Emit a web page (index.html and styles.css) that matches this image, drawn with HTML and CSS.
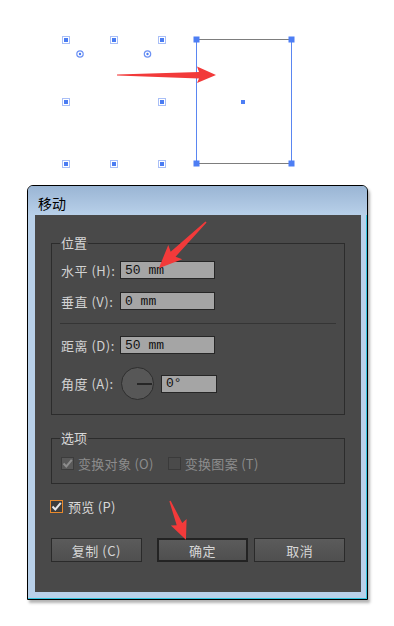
FILE: index.html
```html
<!DOCTYPE html>
<html lang="zh-CN">
<head>
  <meta charset="UTF-8">
  <meta name="viewport" content="width=device-width, initial-scale=1.0">
  <title>移动</title>
  <link rel="stylesheet" href="styles.css">
</head>
<body>
  <div class="canvas">
    <svg width="394" height="185" viewBox="0 0 394 185">
      <defs>
        <g id="handle">
          <rect x="-3.5" y="-3.5" width="7" height="7" fill="none" stroke="#a9bff7"/>
          <rect x="-2" y="-2" width="4" height="4" fill="#4a7cf2"/>
        </g>
        <g id="pivot">
          <circle r="3.2" fill="none" stroke="#6d92f4" stroke-width="1.2"/>
          <circle r="1.2" fill="#4a7cf2"/>
        </g>
        <rect id="corner" x="-3" y="-3" width="6" height="6" fill="#4d7ef4"/>
      </defs>
      <!-- original position -->
      <use href="#handle" x="66" y="40"/>
      <use href="#handle" x="114" y="40"/>
      <use href="#handle" x="162" y="40"/>
      <use href="#handle" x="66" y="102"/>
      <use href="#handle" x="162" y="102"/>
      <use href="#handle" x="66" y="164"/>
      <use href="#handle" x="114" y="164"/>
      <use href="#handle" x="162" y="164"/>
      <use href="#pivot" x="80" y="54"/>
      <use href="#pivot" x="147.5" y="54"/>
      <!-- moved copy -->
      <rect x="196.5" y="39.5" width="95" height="124" fill="none" stroke="#5a86f1"/>
      <line x1="197" y1="39.5" x2="291" y2="39.5" stroke="#7d7d7d"/>
      <line x1="197" y1="163.5" x2="291" y2="163.5" stroke="#7d7d7d"/>
      <use href="#corner" x="196.5" y="39.5"/>
      <use href="#corner" x="291.5" y="39.5"/>
      <use href="#corner" x="196.5" y="163.5"/>
      <use href="#corner" x="291.5" y="163.5"/>
      <rect x="241" y="100" width="4" height="4" fill="#4d7ef4"/>
    </svg>
  </div>

  <div class="dialog">
    <div class="title-bar">移动</div>
    <div class="dialog-body">
      <fieldset class="group group-position">
        <legend>位置</legend>
        <div class="row">
          <label class="row-label">水平 (H):</label>
          <input class="field" type="text" value="50 mm">
        </div>
        <div class="row">
          <label class="row-label">垂直 (V):</label>
          <input class="field" type="text" value="0 mm">
        </div>
        <div class="separator"></div>
        <div class="row">
          <label class="row-label">距离 (D):</label>
          <input class="field" type="text" value="50 mm">
        </div>
        <div class="row row-angle">
          <label class="row-label">角度 (A):</label>
          <div class="dial"><span class="dial-hand"></span></div>
          <input class="field field-angle" type="text" value="0°">
        </div>
      </fieldset>

      <fieldset class="group group-options">
        <legend>选项</legend>
        <div class="check-row">
          <span class="check check-disabled">
            <svg width="11" height="11" viewBox="0 0 11 11"><path d="M1.5 5.5 L4.3 8.5 L9.8 1.8" fill="none" stroke="#8d8d8d" stroke-width="2"/></svg>
          </span>
          <span class="check-text disabled">变换对象 (O)</span>
          <span class="check check-empty"></span>
          <span class="check-text disabled">变换图案 (T)</span>
        </div>
      </fieldset>

      <div class="check-row preview-row">
        <span class="check check-preview">
          <svg width="11" height="11" viewBox="0 0 11 11"><path d="M1.5 5.5 L4.3 8.5 L9.8 1.8" fill="none" stroke="#e6e6e6" stroke-width="2"/></svg>
        </span>
        <span class="check-text">预览 (P)</span>
      </div>

      <div class="buttons">
        <button class="btn btn-copy">复制 (C)</button>
        <button class="btn btn-ok">确定</button>
        <button class="btn btn-cancel">取消</button>
      </div>
    </div>
  </div>

  <svg class="arrows" width="394" height="626" viewBox="0 0 394 626">
    <polygon fill="#f23a3a" transform="translate(117,75)" points="0,-0.6 82,-3 80,-8.5 99,0 80,8 82,3.5 0,0.6"/>
    <polygon fill="#f23a3a" transform="translate(206,222) rotate(135.6)" points="0,-0.8 46,-3.5 43,-10 66,0 43,10 46,3.5 0,0.8"/>
    <polygon fill="#f23a3a" transform="translate(170,501) rotate(67.7)" points="0,-0.7 25,-3 23,-8.5 42,0 23,8.5 25,3 0,0.7"/>
  </svg>
</body>
</html>
```

FILE: styles.css
```css
body {
  margin: 0;
  padding: 0;
  background: #fff;
  font-family: "Noto Sans CJK SC", "Liberation Sans", sans-serif;
  position: relative;
  width: 394px;
  height: 626px;
  overflow: hidden;
}

.canvas svg {
  display: block;
}

.arrows {
  position: absolute;
  top: 0;
  left: 0;
  pointer-events: none;
}

.dialog {
  margin-left: 27px;
  width: 341px;
  box-sizing: border-box;
  border: 1px solid #000;
  border-radius: 6px 6px 0 0;
  background: #b9d1ea;
  box-shadow: inset -1px -1px 0 #33c4de, 2px 3px 3px rgba(0, 0, 0, 0.3);
}

.title-bar {
  height: 29px;
  box-sizing: border-box;
  padding: 4px 0 0 10px;
  display: flex;
  align-items: center;
  font-size: 14px;
  color: #000;
  border-radius: 5px 5px 0 0;
  background: linear-gradient(to bottom, #9ab5d4, #b8d0e9);
}

.dialog-body {
  margin: 0 6px 7px 7px;
  height: 377px;
  box-sizing: border-box;
  padding: 0 16px;
  background: #494949;
  overflow: hidden;
  color: #d6d6d6;
  font-size: 13px;
}

.group {
  margin: 0;
  min-width: 0;
  border: 1px solid #2c2c2c;
  padding: 10px 8px 14px 8px;
}

.group legend {
  padding: 0 1px;
  font-size: 13px;
  line-height: 16px;
  color: #d8d8d8;
}

.group-position {
  margin-top: 20px;
}

.group-options {
  margin-top: 15px;
  padding: 9px 8px 12px 8px;
}

.row {
  display: flex;
  align-items: center;
  height: 18px;
  margin-bottom: 13px;
}

.row:last-child {
  margin-bottom: 0;
}

.row-label {
  width: 60px;
  padding-left: 1px;
  box-sizing: border-box;
  white-space: nowrap;
  letter-spacing: 0.5px;
  color: #d2d2d2;
}

.field {
  width: 95px;
  height: 18px;
  box-sizing: border-box;
  margin: 0;
  border: 1px solid #262626;
  background: #a5a5a5;
  padding: 0 4px;
  font-family: "Liberation Mono", monospace;
  font-size: 13px;
  color: #111;
  outline: none;
}

.separator {
  height: 1px;
  background: #353535;
  margin: 12px 0;
}

.row-angle {
  height: 33px;
}

.dial {
  width: 33px;
  height: 33px;
  box-sizing: border-box;
  border: 1.5px solid #2e2e2e;
  border-radius: 50%;
  background: #575757;
  position: relative;
  margin-left: 1px;
}

.dial-hand {
  position: absolute;
  left: 15px;
  top: 14.5px;
  width: 15px;
  height: 2px;
  background: #262626;
}

.field-angle {
  width: 56px;
  margin-left: 7px;
}

.check-row {
  display: flex;
  align-items: center;
  height: 16px;
}

.check {
  width: 13px;
  height: 13px;
  box-sizing: border-box;
  display: flex;
  align-items: center;
  justify-content: center;
}

.check-disabled {
  margin-left: 1px;
  border: 1px solid #3c3c3c;
  background: #595959;
}

.check-empty {
  margin-left: 14px;
  border: 1px solid #3a3a3a;
  background: #4a4a4a;
}

.check-text {
  margin-left: 4px;
  letter-spacing: 0.3px;
  white-space: nowrap;
}

.check-text.disabled {
  color: #8c8c8c;
}

.preview-row {
  margin: 16px 0 0 -1px;
  height: 13px;
}

.check-preview {
  border: 1px solid #e8892b;
  background: #3d3d3d;
}

.preview-row .check-text {
  margin-left: 5px;
  color: #d8d8d8;
}

.buttons {
  display: flex;
  margin-top: 25px;
}

.btn {
  height: 24px;
  box-sizing: border-box;
  width: 91px;
  margin: 0;
  padding: 0;
  border: 1px solid #2a2a2a;
  background: linear-gradient(to bottom, #5b5b5b, #4f4f4f);
  color: #d6d6d6;
  font-family: "Noto Sans CJK SC", "Liberation Sans", sans-serif;
  font-size: 13px;
  letter-spacing: 0.5px;
}

.btn-ok {
  width: 92px;
  margin: 0 6px 0 15px;
  border: 2px solid #232323;
}
```
